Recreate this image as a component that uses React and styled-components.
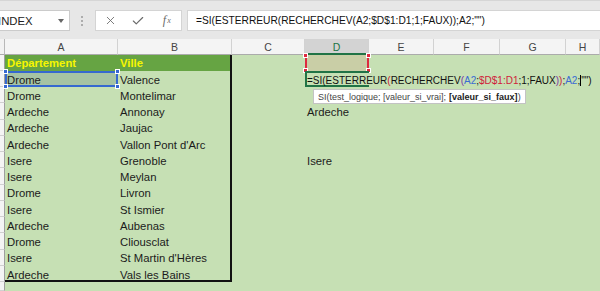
import React from "react";
import styled, { createGlobalStyle, css } from "styled-components";
import { X, Check } from "lucide-react";

const GlobalStyle = createGlobalStyle`
  html, body { margin: 0; padding: 0; }
  body {
    width: 600px;
    height: 291px;
    overflow: hidden;
    background: #e7e7e7;
    font-family: "Liberation Sans", Arial, sans-serif;
  }
`;

const Window = styled.div`
  width: 600px;
  height: 291px;
  overflow: hidden;
  display: flex;
  flex-direction: column;
`;

const Toolbar = styled.div`
  flex: none;
  height: 39px;
  box-sizing: border-box;
  border-top: 1px solid #d6d6d6;
  background: #e7e7e7;
  display: flex;
  align-items: flex-start;
  padding-top: 9px;
`;

const NameBox = styled.div`
  margin-left: -8px;
  width: 78px;
  height: 21px;
  box-sizing: border-box;
  background: #fff;
  border: 1px solid #cbcbcb;
  display: flex;
  align-items: center;
  padding-left: 5px;
  font-size: 11.3px;
  color: #222;
`;

const DropArrow = styled.span`
  margin-left: auto;
  margin-right: 5px;
  width: 0;
  height: 0;
  border-left: 3.5px solid transparent;
  border-right: 3.5px solid transparent;
  border-top: 4px solid #666;
`;

const Grip = styled.svg`
  margin: 5px 0 0 10px;
  flex: none;
`;

const FxBox = styled.div`
  margin-left: 11px;
  width: 87px;
  height: 21px;
  box-sizing: border-box;
  background: #fff;
  border: 1px solid #d4d4d4;
  display: flex;
  align-items: center;
`;

const FxSlot = styled.span`
  width: 29px;
  display: flex;
  justify-content: center;
  align-items: center;
  color: #6a6a6a;
  font-family: "Liberation Serif", "Times New Roman", serif;
  font-style: italic;
  font-size: 12px;

  small {
    font-size: 8px;
    margin-left: 1px;
  }
`;

const FormulaInput = styled.div`
  margin-left: 5px;
  flex: 1;
  height: 21px;
  box-sizing: border-box;
  background: #fff;
  border: 1px solid #d4d4d4;
  border-right: none;
  display: flex;
  align-items: center;
  padding-left: 8px;
  font-size: 10.2px;
  color: #111;
  white-space: nowrap;
`;

const Sheet = styled.div`
  flex: 1;
  position: relative;
  display: grid;
  grid-template-columns: 5px 113px 114px 73px 64px 65px 66px 66px 1fr;
  grid-template-rows: 15.5px repeat(14, 16.25px) 1fr;
  background: #c6e0b4;
  font-size: 11.3px;
  color: #1b1b1b;
`;

const Corner = styled.div`
  background: #f2f2f2;
  border-right: 1px solid #b8b8b8;
  border-bottom: 1px solid #ababab;
`;

const ColHead = styled.div`
  box-sizing: border-box;
  background: #f4f4f4;
  border-right: 1px solid #d2d2d2;
  border-bottom: 1px solid #ababab;
  display: flex;
  align-items: center;
  justify-content: center;
  padding-top: 2px;
  font-size: 10.5px;
  color: #444;
  ${(p) =>
    p.$active &&
    css`
      background: #d3d3d3;
      color: #217346;
      border-bottom: 2px solid #217346;
    `}
`;

const RowHead = styled.div`
  box-sizing: border-box;
  background: #f4f4f4;
  border-right: 1px solid #9e9e9e;
  border-bottom: 1px solid #d0d0d0;
`;

const Cell = styled.div`
  position: relative;
  box-sizing: border-box;
  padding-left: 2px;
  display: flex;
  align-items: flex-end;
  line-height: 13px;
  padding-bottom: 0.5px;
  white-space: nowrap;
  ${(p) =>
    p.$head &&
    css`
      background: #66a443;
      color: #f6f600;
      font-weight: bold;
    `}
  ${(p) => p.$sel && css`background: #a6c3a3;`}
  ${(p) => p.$ref && css`background: #c9cea6;`}
  box-shadow: ${(p) =>
    [
      p.$edgeR && "inset -2px 0 0 #111",
      p.$edgeB && "inset 0 -2px 0 #111",
      p.$sel && "inset 0 0 0 2px #3568d0",
      p.$ref && "inset 2px 0 0 #de2a40, inset -2px 0 0 #de2a40",
      p.$edit && "inset 2px 0 0 #217346, inset 0 2px 0 #217346, inset 0 -2px 0 #217346",
    ]
      .filter(Boolean)
      .join(", ") || "none"};
`;

const Handle = styled.span`
  position: absolute;
  width: 5px;
  height: 5px;
  background: ${(p) => p.$color};
  border: 1px solid #fff;
  box-sizing: border-box;
  ${(p) => (p.$top ? "top: -2px;" : "bottom: -2px;")}
  ${(p) => (p.$left ? "left: -2px;" : "right: -2px;")}
`;

const Formula = styled.span`
  font-size: 10px;
`;

const Tok = styled.span`
  color: ${(p) => p.$c || "#111"};
`;

const Caret = styled.span`
  display: inline-block;
  width: 1px;
  height: 11px;
  background: #000;
  margin: 0 0 -2px;
  vertical-align: baseline;
`;

const Tooltip = styled.div`
  position: absolute;
  left: 313px;
  top: 50px;
  height: 15px;
  box-sizing: border-box;
  padding: 0 4px;
  background: #fff;
  border: 1px solid #c3c3c3;
  display: flex;
  align-items: center;
  font-size: 9px;
  color: #444;
  white-space: nowrap;

  b {
    color: #222;
    margin-left: 3px;
  }
`;

const COLS = ["A", "B", "C", "D", "E", "F", "G", "H"];

const data = [
  ["Département", "Ville"],
  ["Drome", "Valence"],
  ["Drome", "Montelimar"],
  ["Ardeche", "Annonay"],
  ["Ardeche", "Jaujac"],
  ["Ardeche", "Vallon Pont d'Arc"],
  ["Isere", "Grenoble"],
  ["Isere", "Meylan"],
  ["Drome", "Livron"],
  ["Isere", "St Ismier"],
  ["Ardeche", "Aubenas"],
  ["Drome", "Cliousclat"],
  ["Isere", "St Martin d'Hères"],
  ["Ardeche", "Vals les Bains"],
];

const colD = { 3: "Ardeche", 6: "Isere" };

const RED = "#d0213a";
const PURPLE = "#7a35a8";
const BLUE = "#3a6cd3";

function Handles({ color }) {
  return (
    <>
      <Handle $color={color} $top $left />
      <Handle $color={color} $top />
      <Handle $color={color} $left />
      <Handle $color={color} />
    </>
  );
}

function InCellFormula() {
  return (
    <Formula>
      <Tok>=SI(ESTERREUR</Tok>
      <Tok $c={RED}>(</Tok>
      <Tok>RECHERCHEV</Tok>
      <Tok $c={PURPLE}>(</Tok>
      <Tok $c={BLUE}>A2</Tok>
      <Tok>;</Tok>
      <Tok $c={RED}>$D$1:D1</Tok>
      <Tok>;1;FAUX</Tok>
      <Tok $c={PURPLE}>)</Tok>
      <Tok $c={RED}>)</Tok>
      <Tok>;</Tok>
      <Tok $c={BLUE}>A2</Tok>
      <Tok>;</Tok>
      <Caret />
      <Tok>"")</Tok>
    </Formula>
  );
}

export default function App() {
  return (
    <>
      <GlobalStyle />
      <Window>
        <Toolbar>
          <NameBox>
            INDEX
            <DropArrow />
          </NameBox>
          <Grip width="4" height="12" viewBox="0 0 4 12">
            <circle cx="2" cy="2" r="1" fill="#9a9a9a" />
            <circle cx="2" cy="6" r="1" fill="#9a9a9a" />
            <circle cx="2" cy="10" r="1" fill="#9a9a9a" />
          </Grip>
          <FxBox>
            <FxSlot>
              <X size={13} strokeWidth={1.6} />
            </FxSlot>
            <FxSlot>
              <Check size={14} strokeWidth={2} />
            </FxSlot>
            <FxSlot>
              f<small>x</small>
            </FxSlot>
          </FxBox>
          <FormulaInput>=SI(ESTERREUR(RECHERCHEV(A2;$D$1:D1;1;FAUX));A2;"")</FormulaInput>
        </Toolbar>

        <Sheet>
          <Corner />
          {COLS.map((c) => (
            <ColHead key={c} $active={c === "D"}>
              {c}
            </ColHead>
          ))}

          {data.map(([dep, ville], i) => {
            const last = i === data.length - 1;
            return (
              <React.Fragment key={i}>
                <RowHead />
                <Cell $head={i === 0} $sel={i === 1} $edgeB={last}>
                  {dep}
                  {i === 1 && <Handles color="#3568d0" />}
                </Cell>
                <Cell $head={i === 0} $edgeR $edgeB={last}>
                  {ville}
                </Cell>
                <Cell />
                {i === 0 ? (
                  <Cell $ref>
                    <Handles color="#de2a40" />
                  </Cell>
                ) : i === 1 ? (
                  <Cell $edit>
                    <InCellFormula />
                  </Cell>
                ) : (
                  <Cell>{colD[i] || ""}</Cell>
                )}
                <Cell />
                <Cell />
                <Cell />
                <Cell />
              </React.Fragment>
            );
          })}
          <RowHead />

          <Tooltip>
            SI(test_logique; [valeur_si_vrai];<b>[valeur_si_faux]</b>)
          </Tooltip>
        </Sheet>
      </Window>
    </>
  );
}
